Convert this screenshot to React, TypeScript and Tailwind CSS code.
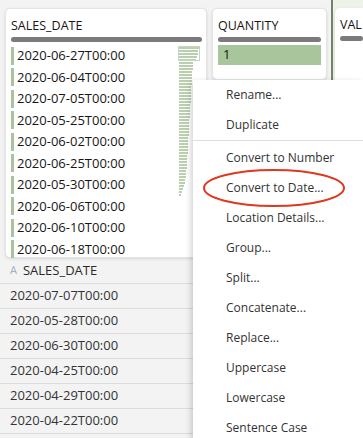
import React from 'react';

const dates = [
  '2020-06-27T00:00',
  '2020-06-04T00:00',
  '2020-07-05T00:00',
  '2020-05-25T00:00',
  '2020-06-02T00:00',
  '2020-06-25T00:00',
  '2020-05-30T00:00',
  '2020-06-06T00:00',
  '2020-06-10T00:00',
  '2020-06-18T00:00',
];

const tableRows = [
  '2020-07-07T00:00',
  '2020-05-28T00:00',
  '2020-06-30T00:00',
  '2020-04-25T00:00',
  '2020-04-29T00:00',
  '2020-04-22T00:00',
];

const menuTop = ['Rename...', 'Duplicate'];
const menuRest = [
  'Convert to Number',
  'Convert to Date...',
  'Location Details...',
  'Group...',
  'Split...',
  'Concatenate...',
  'Replace...',
  'Uppercase',
  'Lowercase',
  'Sentence Case',
];

// bar lengths for the little histogram on the right of the card
const histo = [
  20, 19, 19, 18, 17, 14, 14, 14, 13, 13, 13, 13, 13, 12, 12, 12, 12, 12, 12, 11, 11, 11, 11, 11,
  10, 10, 10, 10, 10, 10, 9, 9, 9, 9, 9, 9, 8, 8, 8, 8, 8, 7, 7, 7, 6, 6, 5, 4, 3, 2,
];

function Histogram() {
  return (
    <svg width="24" height="152" viewBox="0 0 24 152" className="shrink-0">
      {histo.map((w, i) => (
        <rect key={i} x="1" y={1 + i * 3} width={w} height="2" fill="#b9cfad" />
      ))}
      <rect x="0.5" y="0.5" width="21" height="14" fill="none" stroke="#c9d6c2" strokeWidth="1" />
    </svg>
  );
}

function ColumnHeader({ label }: { label: string }) {
  return (
    <div className="flex flex-col">
      <div className="h-[20px] pt-[7px] text-[12.5px] leading-[20px] text-[#161616]">{label}</div>
      <div className="mt-[8px] h-[5px] rounded-full bg-[#7b7b7b]" />
    </div>
  );
}

export default function App() {
  return (
    <div
      className="relative h-[438px] w-[363px] overflow-hidden bg-[#f3f3f3]"
      style={{ fontFamily: '"Open Sans", "Liberation Sans", sans-serif' }}
    >
      <div className="flex h-[258px] items-start">
        {/* SALES_DATE card */}
        <div className="ml-[5px] mt-[8px] h-[250px] w-[202px] rounded-[5px] border border-[#e4e4e4] bg-white pl-[5px] pr-[4px] shadow-[0_1px_3px_rgba(0,0,0,0.12)]">
          <ColumnHeader label="SALES_DATE" />
          <div className="mt-[3px] flex">
            <div className="flex w-[170px] flex-col">
              {dates.map((d) => (
                <div key={d} className="flex h-[21.5px] items-center">
                  <div className="h-[18px] w-[3px] bg-[#a9c49c]" />
                  <span className="ml-[3px] text-[13px] text-[#161616]">{d}</span>
                </div>
              ))}
            </div>
            <div className="ml-[7px] pt-[1px]">
              <Histogram />
            </div>
          </div>
        </div>

        {/* QUANTITY card */}
        <div className="ml-[5px] mt-[8px] h-[72px] w-[115px] rounded-[5px] border border-[#e4e4e4] bg-white px-[5px] shadow-[0_1px_3px_rgba(0,0,0,0.12)]">
          <ColumnHeader label="QUANTITY" />
          <div className="mt-[3px] flex h-[20px] items-center bg-[#a8c59b] pl-[5px] text-[13px] text-[#161616]">1</div>
        </div>

        {/* divider + VAL card */}
        <div className="ml-[4px] h-[80px] w-[2px] bg-[#6f8466]" />
        <div className="h-[80px] flex-1 bg-[#eef3ea] pl-[2px] pt-[8px]">
          <div className="h-[72px] rounded-tl-[5px] bg-white pl-[5px] shadow-[0_1px_3px_rgba(0,0,0,0.12)]">
            <ColumnHeader label="VAL" />
          </div>
        </div>
      </div>

      {/* data table */}
      <div className="flex flex-col">
        <div className="flex h-[26px] items-center border-b border-[#dcdcdc] pl-[10px] text-[13px] text-[#2a2a2a]">
          <span className="text-[11px] text-[#9db0c4]">A</span>
          <span className="ml-[6px]">SALES_DATE</span>
        </div>
        {tableRows.map((r) => (
          <div
            key={r}
            className="flex h-[25px] items-center border-b border-[#dcdcdc] pl-[10px] text-[13px] text-[#333333]"
          >
            {r}
          </div>
        ))}
      </div>

      {/* context menu */}
      <div className="absolute bottom-0 left-[193px] right-0 top-[80px] bg-white shadow-[-2px_2px_6px_rgba(0,0,0,0.18)]">
        {menuTop.map((m) => (
          <div key={m} className="flex h-[30px] items-center pl-[33px] text-[12px] text-[#333333]">
            {m}
          </div>
        ))}
        <div className="mb-[2px] h-px bg-[#dedede]" />
        {menuRest.map((m) => (
          <div key={m} className="flex h-[30px] items-center pl-[33px] text-[12px] text-[#333333]">
            {m}
          </div>
        ))}
      </div>

      {/* annotation ellipse */}
      <svg className="pointer-events-none absolute left-[200px] top-[166px]" width="150" height="44" viewBox="0 0 150 44">
        <ellipse cx="74" cy="22" rx="70" ry="18" fill="none" stroke="#e0381c" strokeWidth="2" />
      </svg>
    </div>
  );
}
